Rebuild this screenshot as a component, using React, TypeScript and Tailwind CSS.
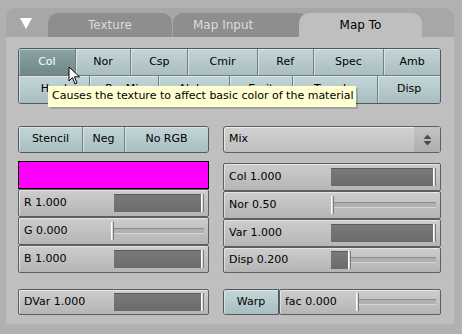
import React from "react";

const font = "font-['DejaVu_Sans',sans-serif]";

const row1 = [
  { label: "Col", w: "w-[57px]", active: true },
  { label: "Nor", w: "w-[56px]" },
  { label: "Csp", w: "w-[57px]" },
  { label: "Cmir", w: "w-[70px]" },
  { label: "Ref", w: "w-[56px]" },
  { label: "Spec", w: "w-[71px]" },
  { label: "Amb", w: "w-[56px]" },
];

const row2 = [
  { label: "Hard", w: "w-[71px]" },
  { label: "RayMir", w: "w-[70px]" },
  { label: "Alpha", w: "w-[71px]" },
  { label: "Emit", w: "w-[63px]" },
  { label: "TransLu", w: "w-[86px]" },
  { label: "Disp", w: "w-[62px]" },
];

type BtnProps = { label: string; w: string; active?: boolean; h?: string };

function Btn({ label, w, active, h = "h-full" }: BtnProps) {
  return (
    <div
      className={`${w} ${h} flex items-center justify-center border-r border-[#6f8183] last:border-r-0 shadow-[inset_1px_1px_0_rgba(255,255,255,0.45)] ${
        active
          ? "bg-gradient-to-b from-[#8aa3a5] to-[#6f888a] text-white"
          : "bg-gradient-to-b from-[#c3d5d7] to-[#a9bec1] text-black"
      }`}
    >
      {label}
    </div>
  );
}

type SliderProps = {
  label: string;
  w: string;
  track: string;
  fill: number;
  h?: string;
};

function Slider({ label, w, track, fill, h = "h-[28px]" }: SliderProps) {
  return (
    <div
      className={`${w} ${h} flex items-center border border-[#5e5e5e] rounded-[2px] bg-gradient-to-b from-[#cdcdcd] to-[#b5b5b5] shadow-[inset_1px_1px_0_rgba(255,255,255,0.5)]`}
    >
      <div className="flex-1 pl-[5px] text-black whitespace-nowrap">{label}</div>
      <div className={`${track} h-[18px] mr-[4px] flex items-stretch`}>
        <div
          className="bg-gradient-to-b from-[#7b7b7b] to-[#6a6a6a] shadow-[inset_0_1px_0_rgba(0,0,0,0.25)]"
          style={{ width: fill }}
        />
        <div className="w-[3px] bg-[#d8d8d8] border-r border-[#7a7a7a] shadow-[inset_1px_0_0_#ffffff]" />
        <div className="flex-1 flex items-center">
          <div className="w-full h-[6px] bg-[#b0b0b0] border-t border-[#8c8c8c] border-b border-b-[#d4d4d4]" />
        </div>
      </div>
    </div>
  );
}

function Cursor() {
  return (
    <svg className="absolute left-[68px] top-[66px]" width="13" height="20" viewBox="0 0 13 20">
      <path
        d="M1 1 L1 15 L4.5 11.5 L7 18 L9 17 L6.5 10.8 L11.5 10.8 Z"
        fill="#ffffff"
        stroke="#000000"
        strokeWidth="1"
        strokeLinejoin="miter"
      />
    </svg>
  );
}

export default function App() {
  return (
    <div className={`w-[462px] h-[334px] bg-[#b1b1b1] pt-[8px] pl-[6px] text-[11px] ${font} relative overflow-hidden`}>
      <div className="w-[448px] h-[316px] flex flex-col">
        {/* header */}
        <div className="h-[29px] bg-[#a7a7a7] rounded-t-[10px] flex items-end pl-[14px]">
          <svg className="self-start mt-[10px]" width="12" height="11" viewBox="0 0 12 11">
            <polygon points="0,0 12,0 6,11" fill="#ffffff" />
          </svg>
          <div className="ml-[16px] w-[124px] h-[24px] bg-[#8e8e8e] rounded-t-[10px] flex items-center justify-center text-[#dcdcdc] text-[12px]">
            Texture
          </div>
          <div className="ml-[1px] w-[136px] h-[24px] bg-[#8e8e8e] rounded-t-[10px] flex items-center pl-[20px] text-[#dcdcdc] text-[12px]">
            Map Input
          </div>
          <div className="ml-[-10px] relative w-[123px] h-[24px] bg-[#bfbfbf] rounded-t-[10px] flex items-center justify-center text-black text-[12px]">
            Map To
          </div>
        </div>

        {/* body */}
        <div className="flex-1 bg-[#bfbfbf] pt-[11px] pl-[12px]">
          <div className="w-[423px] border border-[#4e5a5b] rounded-[3px] overflow-hidden">
            <div className="h-[27px] flex border-b border-[#6f8183]">
              {row1.map((b) => (
                <Btn key={b.label} {...b} />
              ))}
            </div>
            <div className="h-[27px] flex">
              {row2.map((b) => (
                <Btn key={b.label} {...b} />
              ))}
            </div>
          </div>

          <div className="mt-[22px] flex gap-[14px]">
            {/* left column */}
            <div className="w-[191px] flex flex-col">
              <div className="h-[27px] flex border border-[#4e5a5b] rounded-[3px] overflow-hidden">
                <Btn label="Stencil" w="w-[64px]" />
                <Btn label="Neg" w="w-[42px]" />
                <Btn label="No RGB" w="flex-1" />
              </div>
              <div className="mt-[8px] h-[28px] bg-[#ff00ff] border border-black" />
              <Slider label="R 1.000" w="w-[191px]" track="w-[90px]" fill={87} />
              <Slider label="G 0.000" w="w-[191px]" track="w-[93px]" fill={0} />
              <Slider label="B 1.000" w="w-[191px]" track="w-[90px]" fill={87} />
            </div>

            {/* right column */}
            <div className="w-[218px] flex flex-col">
              <div className="h-[27px] flex items-center border border-[#5e5e5e] rounded-[3px] bg-gradient-to-b from-[#d2d2d2] to-[#bebebe] shadow-[inset_1px_1px_0_rgba(255,255,255,0.6)]">
                <div className="flex-1 pl-[5px] text-black">Mix</div>
                <div className="w-[26px] h-full flex items-center justify-center bg-gradient-to-b from-[#c4c4c4] to-[#aeaeae]">
                  <svg width="9" height="12" viewBox="0 0 9 12">
                    <polygon points="0.5,5 8.5,5 4.5,0.5" fill="#4a4a4a" />
                    <polygon points="0.5,7 8.5,7 4.5,11.5" fill="#4a4a4a" />
                  </svg>
                </div>
              </div>
              <div className="mt-[10px]" />
              <Slider label="Col 1.000" w="w-[218px]" track="w-[105px]" fill={102} />
              <Slider label="Nor 0.50" w="w-[218px]" track="w-[105px]" fill={0} />
              <Slider label="Var 1.000" w="w-[218px]" track="w-[105px]" fill={102} />
              <Slider label="Disp 0.200" w="w-[218px]" track="w-[105px]" fill={17} h="h-[26px]" />
            </div>
          </div>

          <div className="mt-[16px] flex gap-[14px]">
            <Slider label="DVar 1.000" w="w-[191px]" track="w-[90px]" fill={87} h="h-[26px]" />
            <div className="w-[218px] h-[26px] flex">
              <div className="w-[56px] h-full flex border border-[#4e5a5b] rounded-l-[3px] overflow-hidden">
                <Btn label="Warp" w="w-full" />
              </div>
              <Slider label="fac 0.000" w="w-[162px]" track="w-[80px]" fill={0} h="h-[26px]" />
            </div>
          </div>
        </div>
      </div>

      {/* tooltip */}
      <div className="absolute left-[48px] top-[86px] w-[308px] h-[21px] bg-[#ffffd2] text-black text-[11px] pl-[4px] flex items-center shadow-[2px_2px_0_rgba(0,0,0,0.15)]">
        Causes the texture to affect basic color of the material
      </div>
      <Cursor />
    </div>
  );
}
